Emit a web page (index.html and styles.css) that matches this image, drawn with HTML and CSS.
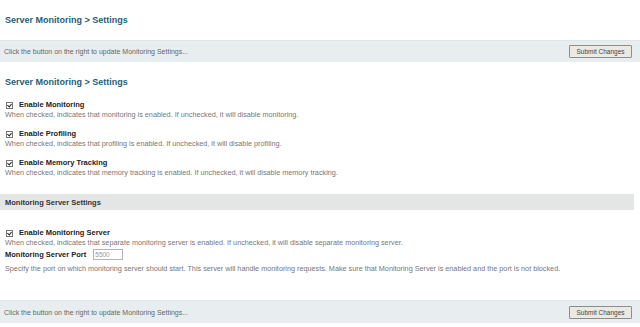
FILE: index.html
```html
<!DOCTYPE html>
<html lang="en">
<head>
  <meta charset="UTF-8">
  <title>Server Monitoring - Settings</title>
  <link rel="stylesheet" href="styles.css">
</head>
<body>
  <div class="page-title">Server Monitoring &gt; Settings</div>

  <div class="action-bar">
    <span class="hint">Click the button on the right to update Monitoring Settings...</span>
    <button class="submit">Submit Changes</button>
  </div>

  <div class="content">
    <h2 class="section-title">Server Monitoring &gt; Settings</h2>

    <div class="setting">
      <div class="label"><span class="check"></span>Enable Monitoring</div>
      <div class="desc">When checked, indicates that monitoring is enabled. If unchecked, it will disable monitoring.</div>
    </div>
    <div class="setting">
      <div class="label"><span class="check"></span>Enable Profiling</div>
      <div class="desc">When checked, indicates that profiling is enabled. If unchecked, it will disable profiling.</div>
    </div>
    <div class="setting">
      <div class="label"><span class="check"></span>Enable Memory Tracking</div>
      <div class="desc">When checked, indicates that memory tracking is enabled. If unchecked, it will disable memory tracking.</div>
    </div>
  </div>

  <div class="group-header">Monitoring Server Settings</div>

  <div class="content">
    <div class="setting tight">
      <div class="label"><span class="check"></span>Enable Monitoring Server</div>
      <div class="desc">When checked, indicates that separate monitoring server is enabled. If unchecked, it will disable separate monitoring server.</div>
    </div>
    <div class="setting">
      <div class="label port-row">Monitoring Server Port <input class="port" type="text" value="5500"></div>
      <div class="desc">Specify the port on which monitoring server should start. This server will handle monitoring requests. Make sure that Monitoring Server is enabled and the port is not blocked.</div>
    </div>
  </div>

  <div class="action-bar bottom">
    <span class="hint">Click the button on the right to update Monitoring Settings...</span>
    <button class="submit">Submit Changes</button>
  </div>
</body>
</html>
```

FILE: styles.css
```css
body {
  font-family: 'Liberation Sans', Arial, sans-serif;
  color: #333;
  background-color: #fff;
  margin: 0;
  padding: 0;
}
.page-title {
  height: 40px;
  display: flex;
  align-items: center;
  padding-left: 5px;
  font-size: 9px;
  font-weight: bold;
  color: #1c5f78;
  padding-bottom: 1px;
  box-sizing: border-box;
}
.action-bar {
  height: 21px;
  background-color: #e8eef0;
  border-top: 1px solid #dfe6e8;
  display: flex;
  align-items: center;
  justify-content: space-between;
  padding: 0 8px 0 4px;
}
.action-bar.bottom {
  margin-top: 26px;
  height: 22px;
}
.hint {
  font-size: 7px;
  color: #666;
}
.submit {
  font-family: 'Liberation Sans', Arial, sans-serif;
  font-size: 6.5px;
  color: #444;
  height: 13px;
  width: 63px;
  padding: 0;
  background-color: #ebe9e1;
  border: 1px solid #8d8d8d;
  border-radius: 1px;
}
.content {
  padding: 0 5px;
}
.section-title {
  font-size: 9px;
  font-weight: bold;
  color: #1c5f78;
  margin: 15px 0 13px;
  line-height: 10px;
}
.setting {
  margin-bottom: 9px;
}
.setting.tight {
  margin-bottom: 1px;
}
.label {
  font-size: 7.5px;
  font-weight: bold;
  color: #222;
  line-height: 10px;
  display: flex;
  align-items: center;
  padding-left: 1px;
}
.check {
  width: 5px;
  height: 5px;
  border: 1px solid #777;
  margin-right: 6px;
  position: relative;
  background: #fff;
}
.check::after {
  content: "";
  position: absolute;
  left: 1px;
  top: 0;
  width: 2px;
  height: 3px;
  border-right: 1px solid #222;
  border-bottom: 1px solid #222;
  transform: rotate(40deg);
}
.desc {
  font-size: 7.25px;
  color: #777;
  line-height: 10px;
}
.group-header {
  margin: 16px 6px 18px 0;
  height: 16px;
  background-color: #e4e6e6;
  display: flex;
  align-items: center;
  padding-left: 5px;
  font-size: 7.5px;
  font-weight: bold;
  color: #333;
}
.port-row {
  height: 11px;
  margin-bottom: 4px;
  padding-left: 0;
}
.port {
  width: 30px;
  height: 11px;
  box-sizing: border-box;
  border: 1px solid #b5b5b5;
  margin-left: 7px;
  padding: 0 1px;
  font-family: 'Liberation Sans', Arial, sans-serif;
  font-size: 6.5px;
  color: #999;
}
```
